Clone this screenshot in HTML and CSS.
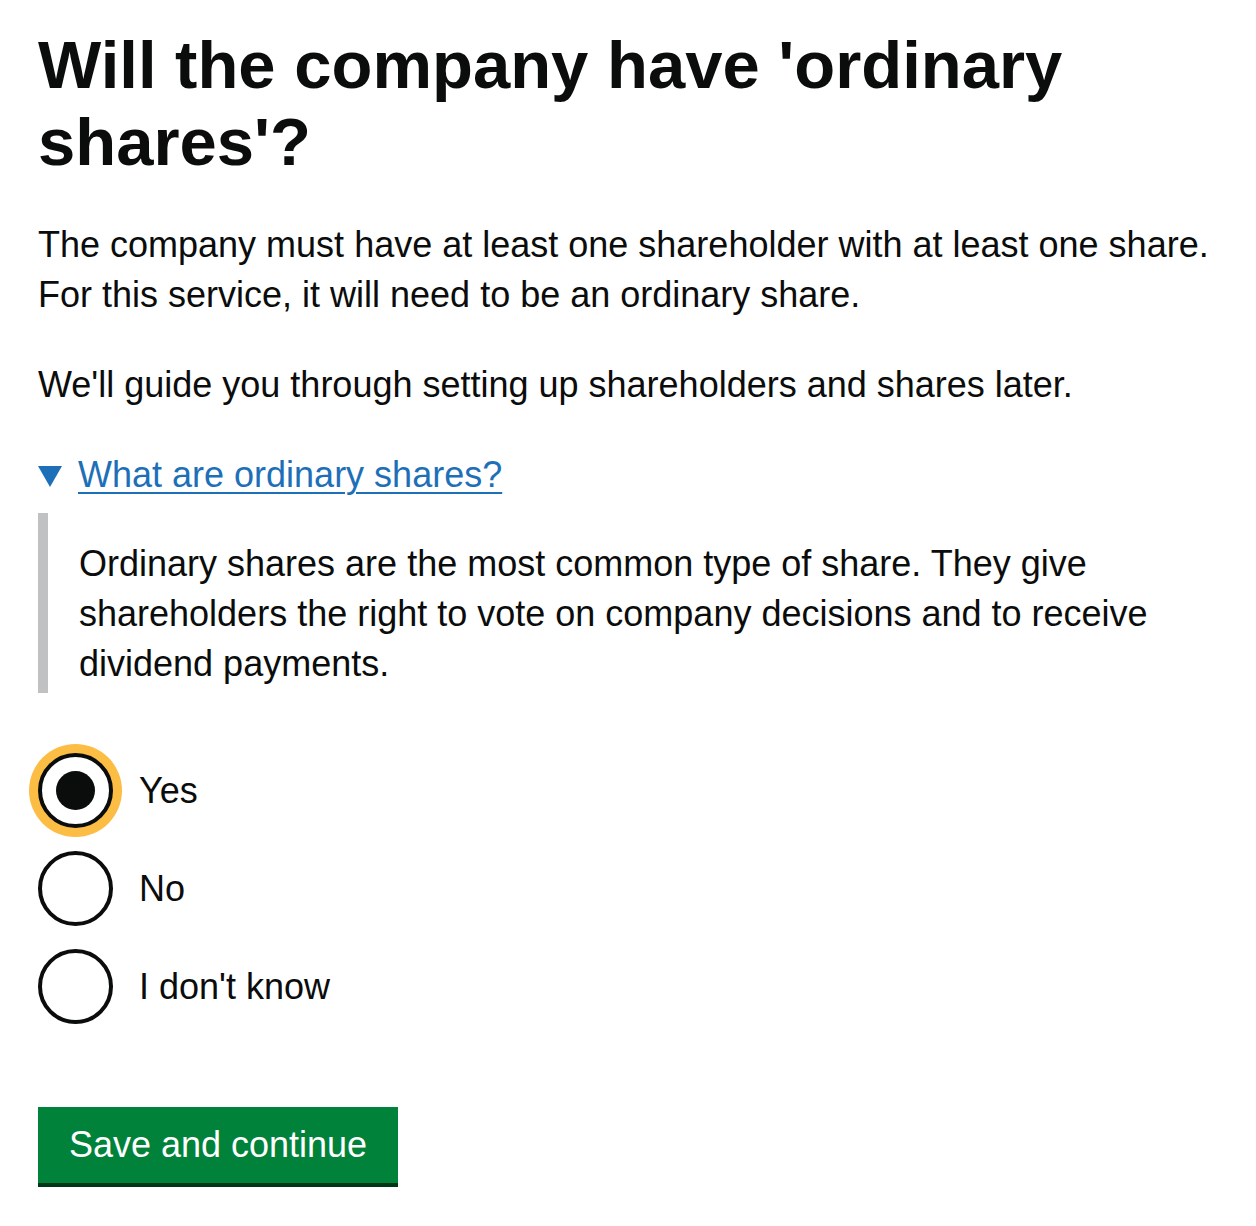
FILE: index.html
```html
<!DOCTYPE html>
<html lang="en">
<head>
<meta charset="utf-8">
<title>Will the company have 'ordinary shares'?</title>
<link rel="stylesheet" href="styles.css">
</head>
<body>
<main class="page">
  <h1 class="heading">Will the company have 'ordinary shares'?</h1>
  <p class="body-text">The company must have at least one shareholder with at least one share. For this service, it will need to be an ordinary share.</p>
  <p class="body-text">We'll guide you through setting up shareholders and shares later.</p>

  <details class="details" open>
    <summary class="details-summary">
      <span class="details-arrow" aria-hidden="true"></span>
      <span class="details-link">What are ordinary shares?</span>
    </summary>
    <div class="details-text">Ordinary shares are the most common type of share. They give shareholders the right to vote on company decisions and to receive dividend payments.</div>
  </details>

  <div class="radios">
    <label class="radio-item">
      <span class="radio-circle radio-circle--checked radio-circle--focus"><span class="radio-dot"></span></span>
      <span class="radio-label">Yes</span>
    </label>
    <label class="radio-item">
      <span class="radio-circle"></span>
      <span class="radio-label">No</span>
    </label>
    <label class="radio-item">
      <span class="radio-circle"></span>
      <span class="radio-label">I don't know</span>
    </label>
  </div>

  <button class="button" type="button">Save and continue</button>
</main>
</body>
</html>
```

FILE: styles.css
```css
html, body {
  margin: 0;
  padding: 0;
  background: #ffffff;
}

body {
  font-family: "Liberation Sans", Arial, sans-serif;
  color: #0b0c0c;
}

.page {
  padding: 26px 38px 0 38px;
}

.heading {
  margin: 0 0 40px 0;
  font-size: 67px;
  line-height: 77px;
  font-weight: 700;
  letter-spacing: 0;
}

.body-text {
  margin: 0 0 40px 0;
  font-size: 36px;
  line-height: 50px;
}

.details {
  margin: 0 0 60px 0;
}

.details-summary {
  display: flex;
  align-items: center;
  gap: 16px;
  list-style: none;
  cursor: pointer;
  font-size: 36px;
  line-height: 50px;
  margin-bottom: 13px;
}

.details-summary::-webkit-details-marker {
  display: none;
}

.details-arrow {
  width: 0;
  height: 0;
  border-left: 12.5px solid transparent;
  border-right: 12.5px solid transparent;
  border-top: 21px solid #1d70b8;
  margin-top: 2px;
}

.details-link {
  color: #1d70b8;
  text-decoration: underline;
  text-decoration-thickness: 2px;
  text-underline-offset: 5px;
}

.details-text {
  border-left: 10px solid #bfc1c3;
  padding: 26px 0 4px 31px;
  font-size: 36px;
  line-height: 50px;
  max-width: 1100px;
}

.radios {
  display: flex;
  flex-direction: column;
  gap: 23px;
  margin-bottom: 83px;
}

.radio-item {
  display: flex;
  align-items: center;
  gap: 26px;
  font-size: 36px;
  line-height: 50px;
}

.radio-circle {
  box-sizing: border-box;
  width: 75px;
  height: 75px;
  border: 4px solid #0b0c0c;
  border-radius: 50%;
  background: #ffffff;
  display: flex;
  align-items: center;
  justify-content: center;
  flex: none;
}

.radio-circle--focus {
  box-shadow: 0 0 0 9px #fcbd45;
}

.radio-dot {
  width: 39px;
  height: 39px;
  border-radius: 50%;
  background: #0b0c0c;
}

.button {
  display: block;
  box-sizing: border-box;
  width: 360px;
  height: 80px;
  margin: 0;
  padding: 0 0 4px 0;
  border: 0;
  border-radius: 0;
  background: #00823b;
  box-shadow: inset 0 -4px 0 #003618;
  color: #ffffff;
  font-family: "Liberation Sans", Arial, sans-serif;
  font-size: 36px;
  line-height: 50px;
  text-align: center;
}
```
